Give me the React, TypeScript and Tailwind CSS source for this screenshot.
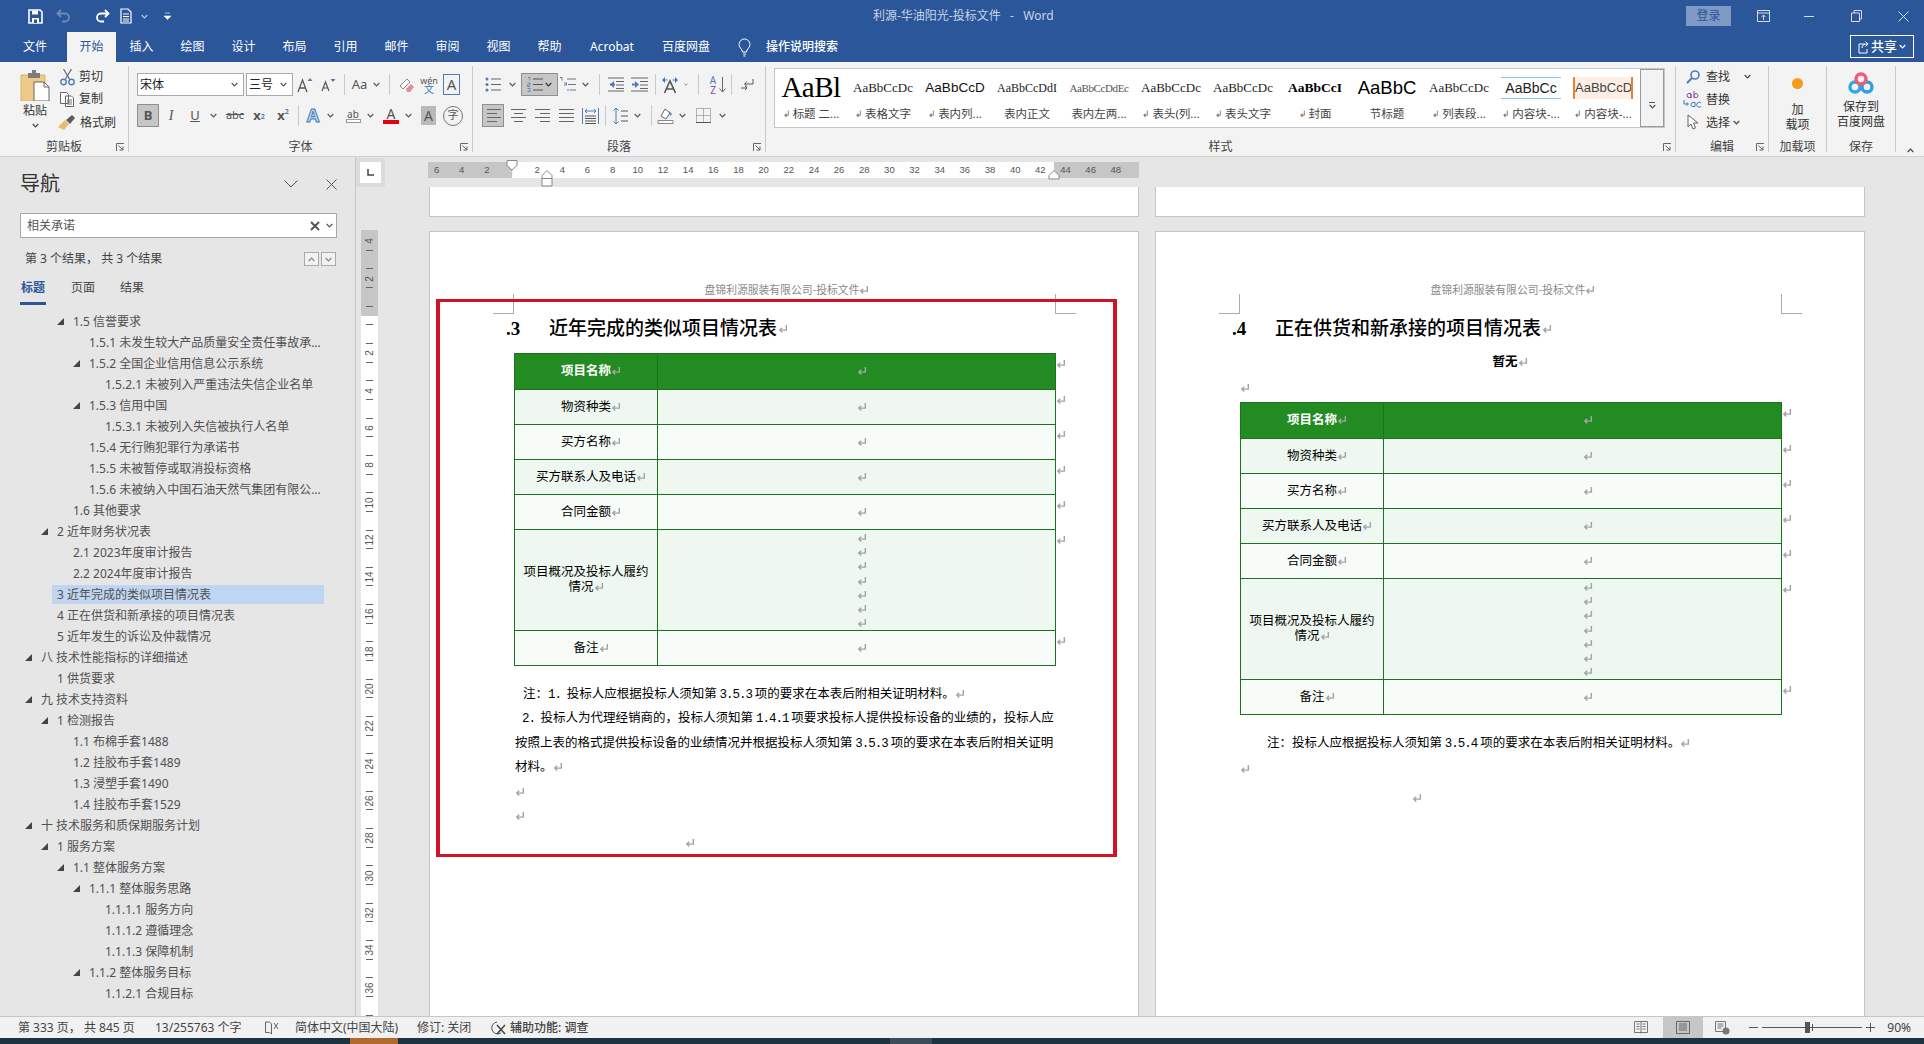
import React from "react";

const UI = "font-['Noto_Sans','Noto_Sans_CJK_SC',sans-serif]";
const DOC = "font-['Liberation_Serif','Noto_Sans_CJK_SC',serif]";

function Chev({ className = "" }: { className?: string }) {
  return (
    <svg width="7" height="5" viewBox="0 0 7 5" className={className}>
      <path d="M.7 1 3.5 3.8 6.3 1" fill="none" stroke="currentColor" strokeWidth="1.2" />
    </svg>
  );
}

function Launcher() {
  return (
    <svg width="9" height="9" viewBox="0 0 9 9" className="absolute right-[3px] top-[6px]">
      <path d="M.5 8V.5H8M2.5 2.5 7 7M7 3.5V7H3.5" fill="none" stroke="#666" strokeWidth="1" />
    </svg>
  );
}

function Ret({ className = "" }: { className?: string }) {
  return (
    <svg width="10" height="10" viewBox="0 0 9 9" className={"inline-block align-[-1px] " + className}>
      <path d="M7.5 1v4.5H2M3.8 3.3 1.6 5.5l2.2 2.2" fill="none" stroke="#a4a4a4" strokeWidth="1.3" />
    </svg>
  );
}

function Sep({ className = "" }: { className?: string }) {
  return <div className={"w-px bg-[#c9c9c9] " + className} />;
}

function Box({ className = "", children }: { className?: string; children?: React.ReactNode }) {
  return <div className={"flex shrink-0 items-center justify-center text-[#555] " + className}>{children}</div>;
}

function Lines({ rows, color = "#666" }: { rows: [number, number][]; color?: string }) {
  return (
    <svg width="17" height="15" viewBox="0 0 17 15">
      {rows.map(([a, b], i) => (
        <path key={i} d={`M${a} ${1.5 + i * (12 / (rows.length - 1))}H${b}`} stroke={color} strokeWidth="1" />
      ))}
    </svg>
  );
}

function GroupLabel({ text, launcher = false }: { text: string; launcher?: boolean }) {
  return (
    <div className="relative flex h-[19px] items-center justify-center text-[12px] leading-[19px] text-[#444]">
      {text}
      {launcher && <Launcher />}
    </div>
  );
}

const styles = [
  { p: "AaBl", l: "标题 二...", r: true, c: "font-['Liberation_Serif',serif] text-[29px] text-black tracking-[-0.5px]" },
  { p: "AaBbCcDc", l: "表格文字", r: true, c: "font-['Liberation_Serif',serif] text-[13px] text-[#222]" },
  { p: "AaBbCcD", l: "表内列...", r: true, c: "font-['Liberation_Sans',sans-serif] text-[13.5px] text-[#111]" },
  { p: "AaBbCcDdI", l: "表内正文", r: false, c: "font-['Liberation_Serif',serif] text-[12px] text-[#222]" },
  { p: "AaBbCcDdEc", l: "表内左两...", r: false, c: "font-['Liberation_Serif',serif] text-[11px] text-[#555] tracking-[-0.4px]" },
  { p: "AaBbCcDc", l: "表头(列...", r: true, c: "font-['Liberation_Serif',serif] text-[13px] text-[#222]" },
  { p: "AaBbCcDc", l: "表头文字", r: true, c: "font-['Liberation_Serif',serif] text-[13px] text-[#222]" },
  { p: "AaBbCcI", l: "封面", r: true, c: "font-['Liberation_Serif',serif] font-bold text-[13.5px] text-black" },
  { p: "AaBbC", l: "节标题", r: false, c: "font-['Liberation_Sans',sans-serif] text-[18.5px] text-black" },
  { p: "AaBbCcDc", l: "列表段...", r: true, c: "font-['Liberation_Serif',serif] text-[13px] text-[#222]" },
  { p: "AaBbCc", l: "内容块-...", r: true, c: "font-['Liberation_Sans',sans-serif] text-[14px] text-[#222] border-y border-[#7bd0f3] leading-[20px]" },
  { p: "AaBbCcDt", l: "内容块-...", r: true, c: "font-['Liberation_Sans',sans-serif] text-[13px] text-[#444] bg-[#fdeee6] border-x-2 border-[#e9803a] leading-[22px]" },
];

const tree: [number, boolean, string, boolean?][] = [
  [2, true, "1.5 信誉要求"],
  [3, false, "1.5.1 未发生较大产品质量安全责任事故承..."],
  [3, true, "1.5.2 全国企业信用信息公示系统"],
  [4, false, "1.5.2.1 未被列入严重违法失信企业名单"],
  [3, true, "1.5.3 信用中国"],
  [4, false, "1.5.3.1 未被列入失信被执行人名单"],
  [3, false, "1.5.4 无行贿犯罪行为承诺书"],
  [3, false, "1.5.5 未被暂停或取消投标资格"],
  [3, false, "1.5.6 未被纳入中国石油天然气集团有限公..."],
  [2, false, "1.6 其他要求"],
  [1, true, "2 近年财务状况表"],
  [2, false, "2.1 2023年度审计报告"],
  [2, false, "2.2 2024年度审计报告"],
  [1, false, "3 近年完成的类似项目情况表", true],
  [1, false, "4 正在供货和新承接的项目情况表"],
  [1, false, "5 近年发生的诉讼及仲裁情况"],
  [0, true, "八 技术性能指标的详细描述"],
  [1, false, "1 供货要求"],
  [0, true, "九 技术支持资料"],
  [1, true, "1 检测报告"],
  [2, false, "1.1 布棉手套1488"],
  [2, false, "1.2 挂胶布手套1489"],
  [2, false, "1.3 浸塑手套1490"],
  [2, false, "1.4 挂胶布手套1529"],
  [0, true, "十 技术服务和质保期服务计划"],
  [1, true, "1 服务方案"],
  [2, true, "1.1 整体服务方案"],
  [3, true, "1.1.1 整体服务思路"],
  [4, false, "1.1.1.1 服务方向"],
  [4, false, "1.1.1.2 遵循理念"],
  [4, false, "1.1.1.3 保障机制"],
  [3, true, "1.1.2 整体服务目标"],
  [4, false, "1.1.2.1 合规目标"],
];
const levelPad = ["pl-[25px]", "pl-[41px]", "pl-[57px]", "pl-[73px]", "pl-[89px]"];

function TitleBar() {
  return (
    <div className="flex h-[32px] shrink-0 items-center bg-[#2b579a] text-white">
      <div className="flex w-[180px] shrink-0 items-center">
        <Box className="ml-[25px] w-[20px] text-white">
          <svg width="15" height="15" viewBox="0 0 15 15">
            <path d="M1 1h11l2 2v11H1z" fill="none" stroke="#fff" strokeWidth="1.6" />
            <path d="M4 1.5h6v4H4zM4 9h7v5H4z" fill="#fff" />
            <path d="M6 10.5h3v3.5H6z" fill="#2b579a" />
          </svg>
        </Box>
        <Box className="ml-[10px] w-[16px]">
          <svg width="15" height="14" viewBox="0 0 15 14">
            <path d="M5 1 1.5 4.500 5 8M2 4.500h7a4 4 0 0 1 0 8H6" fill="none" stroke="#6d8ab8" strokeWidth="1.800" />
          </svg>
        </Box>
        <Box className="ml-[1px] w-[14px] text-[#6d8ab8]"><Chev /></Box>
        <Box className="ml-[8px] w-[16px]">
          <svg width="15" height="14" viewBox="0 0 15 14">
            <path d="M10 1l3.500 3.500L10 8M13 4.500H6a4 4 0 0 0 0 8h3" fill="none" stroke="#fff" strokeWidth="1.800" />
          </svg>
        </Box>
        <Box className="ml-[8px] w-[16px]">
          <svg width="12" height="16" viewBox="0 0 12 16">
            <path d="M1 1h7l3 3v11H1z" fill="none" stroke="#fff" strokeWidth="1.200" />
            <path d="M3 6h6M3 8.500h6M3 11h6M3 13h6" stroke="#fff" />
          </svg>
        </Box>
        <Box className="ml-[3px] w-[14px] text-[#b6c6de]"><Chev /></Box>
        <Box className="ml-[11px] w-[10px]">
          <svg width="7" height="8" viewBox="0 0 7 8"><path d="M1 1h5M0 4h7L3.500 7.500z" fill="#fff" stroke="#fff" strokeWidth=".6" /></svg>
        </Box>
      </div>
      <div className="ml-[693px] w-[186px] shrink-0 whitespace-pre text-[12px] text-[#c9d4e6]">利源-华油阳光-投标文件   -   Word</div>
      <div className="ml-[627px] flex h-[20px] w-[45px] shrink-0 items-center justify-center bg-[#7e9ac4] text-[12px] text-[#2b579a]">登录</div>
      <Box className="ml-[21px] w-[22px]">
        <svg width="13" height="12" viewBox="0 0 13 12">
          <path d="M.5.500h12v11H.5zM.5 3h12M6.500 10V5M4.500 7l2-2 2 2" fill="none" stroke="#d6deeb" />
        </svg>
      </Box>
      <Box className="ml-[25px] w-[20px]"><div className="h-px w-[10px] bg-[#d6deeb]" /></Box>
      <Box className="ml-[27px] w-[20px]">
        <svg width="11" height="12" viewBox="0 0 11 12"><path d="M.5 3h8v8.500H.5zM3 3V.5h7.500V9H8.500" fill="none" stroke="#d6deeb" /></svg>
      </Box>
      <Box className="ml-[27px] w-[20px]">
        <svg width="11" height="11" viewBox="0 0 11 11"><path d="M.5.500l10 10M10.500.500l-10 10" stroke="#d6deeb" /></svg>
      </Box>
    </div>
  );
}

function TabBar() {
  const two = ["插入", "绘图", "设计", "布局", "引用", "邮件", "审阅", "视图", "帮助"];
  return (
    <div className="flex h-[30px] shrink-0 items-stretch bg-[#2b579a] pl-[6px] text-[12px] text-white">
      <div className="flex w-[58px] items-center justify-center">文件</div>
      <div className="ml-[3px] flex w-[49px] items-center justify-center bg-[#f3f3f3] text-[#2b579a]">开始</div>
      {two.map((t) => (
        <div key={t} className="flex w-[51px] items-center justify-center">{t}</div>
      ))}
      <div className="flex w-[74px] items-center justify-center">Acrobat</div>
      <div className="flex w-[74px] items-center justify-center">百度网盘</div>
      <div className="flex w-[43px] items-center justify-center">
        <svg width="13" height="19" viewBox="0 0 13 19">
          <path d="M4.500 14c0-3-3.500-4-3.500-7.500a5.500 5.500 0 0 1 11 0C12 10 8.500 11 8.500 14zM5 16h3M5.500 18h2" fill="none" stroke="#fff" />
        </svg>
      </div>
      <div className="flex items-center font-medium">操作说明搜索</div>
      <div className="ml-[1012px] mt-[3px] flex h-[23px] w-[64px] items-center justify-center gap-[2px] border border-white font-medium text-[13px]">
        <svg width="11" height="14" viewBox="0 0 11 14">
          <path d="M7 4H1v9h8V9M4 8c0-3 2-4 5-4M7.500 1.500 10 4 7.500 6.500" fill="none" stroke="#fff" />
        </svg>
        共享
        <Chev />
      </div>
    </div>
  );
}

function Ribbon() {
  return (
    <div className={"flex h-[95px] shrink-0 border-b border-[#d0d0d0] bg-[#f3f3f3] text-[#333]"}>
      {/* 剪贴板 */}
      <div className="flex w-[128px] shrink-0 flex-col">
        <div className="flex h-[75px]">
          <div className="flex w-[70px] flex-col items-center pt-[8px]">
            <svg width="30" height="31" viewBox="0 0 30 31">
              <path d="M1 5h24v26H1z" fill="#edca85" stroke="#d9b56e" />
              <path d="M8 3h4V0h4v3h4v5H8z" fill="#7d7d7d" />
              <path d="M14 12h10l5 5v14H14z" fill="#fff" stroke="#666" />
              <path d="M24 12v5h5" fill="none" stroke="#666" />
            </svg>
            <div className="mt-[1px] text-[12px] leading-[18px] text-[#333]">粘贴</div>
            <Chev className="mt-[3px] text-[#444]" />
          </div>
          <div className="flex flex-col pt-[4px] text-[12px] leading-[22px] text-[#333]">
            <div className="flex h-[22px] items-center">
              <svg width="15" height="17" viewBox="0 0 15 17" className="ml-[-10px] mr-[4px]">
                <path d="M3.500 0l6 10M11.500 0l-6 10" stroke="#666" strokeWidth="1.200" />
                <circle cx="3.500" cy="13" r="2.700" fill="none" stroke="#4a7ebb" strokeWidth="1.400" />
                <circle cx="11.500" cy="13" r="2.700" fill="none" stroke="#4a7ebb" strokeWidth="1.400" />
              </svg>
              剪切
            </div>
            <div className="flex h-[22px] items-center">
              <svg width="14" height="15" viewBox="0 0 14 15" className="ml-[-10px] mr-[5px]">
                <path d="M.5.500h6l2 2v9h-8zM5.500 4h6l2 2v8.500h-8z" fill="#fff" stroke="#666" />
                <path d="M7 8h5M7 10h5M7 12h5" stroke="#777" />
              </svg>
              复制
            </div>
            <div className="flex h-[25px] items-center">
              <svg width="17" height="16" viewBox="0 0 17 16" className="ml-[-12px] mr-[5px]">
                <path d="M0 12 7 5l4 4-5 6z" fill="#e5bd72" />
                <path d="M8 5l6-5 3 3-5 6z" fill="#5c5c5c" />
              </svg>
              格式刷
            </div>
          </div>
        </div>
        <GroupLabel text="剪贴板" launcher />
      </div>
      <Sep className="my-[4px]" />
      {/* 字体 */}
      <div className="flex w-[343px] shrink-0 flex-col">
        <div className="flex h-[75px] flex-col gap-[8px] pt-[11px] pl-[8px]">
          <div className="flex h-[23px] items-center">
            <div className="flex h-[23px] w-[107px] items-center justify-between border border-[#aaa] bg-white pl-[2px] pr-[5px] text-[12px] text-[#222]">宋体<Chev className="text-[#555]" /></div>
            <div className="ml-[2px] flex h-[23px] w-[47px] items-center justify-between border border-[#aaa] bg-white pl-[2px] pr-[5px] text-[12px] text-[#222]">三号<Chev className="text-[#555]" /></div>
            <Box className="w-[24px]">
              <svg width="16" height="16" viewBox="0 0 16 16"><path d="M1 15 5.500 3 10 15M2.700 11h5.600" fill="none" stroke="#555" strokeWidth="1.300" /><path d="M10.500 4 13 1l2.500 3z" fill="#4a7ebb" /></svg>
            </Box>
            <Box className="w-[22px]">
              <svg width="15" height="14" viewBox="0 0 15 14"><path d="M1 13 4.500 4 8 13M2.300 10h4.400" fill="none" stroke="#555" strokeWidth="1.200" /><path d="M9.500 1h5L12 4z" fill="#4a7ebb" /></svg>
            </Box>
            <Box className="w-[10px]"><Sep className="h-[21px]" /></Box>
            <Box className="w-[21px] text-[13px]">Aa</Box>
            <Box className="w-[12px]"><Chev /></Box>
            <Box className="w-[14px]"><Sep className="h-[21px]" /></Box>
            <Box className="w-[21px]">
              <svg width="16" height="16" viewBox="0 0 16 16">
                <path d="M1 9 8 2l3 3-7 7z" fill="#fff" stroke="#888" />
                <path d="M7 12l5-5 3 3-4 5H8z" fill="#e98a9b" />
              </svg>
            </Box>
            <Box className="w-[24px] flex-col leading-[9px] text-[#444]">
              <span className="text-[9px]">wén</span>
              <span className="text-[10px] text-[#3d78b8]">文</span>
            </Box>
            <Box className="ml-[2px] h-[21px] w-[17px] border border-[#4a7ebb] text-[15px] text-[#333]">A</Box>
          </div>
          <div className="flex h-[23px] items-center text-[12px]">
            <Box className="h-[23px] w-[22px] border border-[#8f8f8f] bg-[#c6c6c6] font-bold text-[13px] text-[#333]">B</Box>
            <Box className="ml-[1px] w-[22px] font-['Liberation_Serif',serif] italic text-[14px]">I</Box>
            <Box className="ml-[2px] w-[22px] text-[13px] underline">U</Box>
            <Box className="w-[14px]"><Chev /></Box>
            <Box className="ml-[2px] w-[26px] text-[11px] line-through">abc</Box>
            <Box className="w-[22px] font-bold text-[13px]">x<sub className="text-[7px] text-[#4a7ebb]">2</sub></Box>
            <Box className="ml-[1px] w-[24px] font-bold text-[13px]">x<sup className="text-[7px] text-[#4a7ebb]">2</sup></Box>
            <Box className="w-[6px]"><Sep className="h-[21px]" /></Box>
            <Box className="ml-[1px] w-[22px] text-[18px] font-bold text-[#bcd6f0] [-webkit-text-stroke:1px_#4a7ebb]">A</Box>
            <Box className="w-[12px]"><Chev /></Box>
            <Box className="ml-[6px] w-[22px] flex-col leading-[10px]">
              <span className="text-[10px]">ab</span>
              <span className="h-[4px] w-[15px] border border-[#999] bg-white" />
            </Box>
            <Box className="w-[13px]"><Chev /></Box>
            <Box className="ml-[3px] w-[22px] flex-col leading-[12px]">
              <span className="text-[14px]">A</span>
              <span className="h-[4px] w-[16px] bg-[#e3000f]" />
            </Box>
            <Box className="w-[12px]"><Chev /></Box>
            <Box className="ml-[7px] h-[19px] w-[15px] bg-[#b9b9b9] text-[14px]">A</Box>
            <Box className="ml-[7px] h-[20px] w-[20px] rounded-full border border-[#777] text-[11px]">字</Box>
          </div>
        </div>
        <GroupLabel text="字体" launcher />
      </div>
      <Sep className="my-[4px]" />
      {/* 段落 */}
      <div className="flex w-[292px] shrink-0 flex-col">
        <div className="flex h-[75px] flex-col gap-[8px] pt-[11px]">
          <div className="flex h-[23px] items-center pl-[8px]">
            <Box className="w-[24px]">
              <svg width="17" height="15" viewBox="0 0 17 15"><circle cx="2" cy="2" r="1.500" fill="#4a7ebb" /><circle cx="2" cy="7.500" r="1.500" fill="#4a7ebb" /><circle cx="2" cy="13" r="1.500" fill="#4a7ebb" /><path d="M6 2h10M6 7.500h10M6 13h10" stroke="#666" /></svg>
            </Box>
            <Box className="w-[14px]"><Chev /></Box>
            <div className="ml-[2px] flex h-[23px] w-[37px] items-center justify-around border border-[#8f8f8f] bg-[#c6c6c6] px-[4px]">
              <svg width="17" height="15" viewBox="0 0 17 15"><path d="M6 2h10M6 7.500h10M6 13h10" stroke="#555" /><path d="M1 .5h2v3M.5 6h2.500v2h-2.500v1.500H3M.5 11.500h2.500v3H.5" fill="none" stroke="#4a7ebb" strokeWidth=".8" /></svg>
              <Chev />
            </div>
            <Box className="w-[20px]">
              <svg width="18" height="15" viewBox="0 0 18 15"><path d="M1 .5h2v3M8 2h9M9 7.500h8M11 13h6" stroke="#666" strokeWidth=".9" fill="none" /><path d="M5 6h2.500v2H5M9 12v2" stroke="#4a7ebb" fill="none" /></svg>
            </Box>
            <Box className="w-[14px]"><Chev /></Box>
            <Box className="w-[14px]"><Sep className="h-[21px]" /></Box>
            <Box className="w-[18px]">
              <svg width="17" height="15" viewBox="0 0 17 15"><path d="M1 1h16M9 4.500h8M9 8h8M9 11.500h8M1 14h16" stroke="#666" /><path d="M7 4 3 7.500 7 11z" fill="#4a7ebb" /><path d="M3 7.500h5" stroke="#4a7ebb" strokeWidth="2" /></svg>
            </Box>
            <Box className="w-[30px]">
              <svg width="17" height="15" viewBox="0 0 17 15"><path d="M0 1h17M9 4.500h8M9 8h8M9 11.500h8M0 14h17" stroke="#666" /><path d="M4 4l4 3.500L4 11z" fill="#4a7ebb" /><path d="M1 7.500h4" stroke="#4a7ebb" strokeWidth="2" /></svg>
            </Box>
            <Box className="w-[2px]"><Sep className="h-[21px]" /></Box>
            <Box className="w-[28px]">
              <svg width="18" height="18" viewBox="0 0 18 18">
                <path d="M3.500 17 9 5l5.500 12M5.500 13h7" fill="none" stroke="#555" strokeWidth="1.600" />
                <path d="M1 4l3-3v6zM17 4l-3-3v6z" fill="#3d78b8" />
                <path d="M4 4h2.500M11.500 4H14" stroke="#3d78b8" />
              </svg>
            </Box>
            <Box className="w-[4px]"><Chev /></Box>
            <Box className="w-[20px]"><Sep className="h-[21px]" /></Box>
            <Box className="w-[10px] flex-col text-[10px] leading-[10px]"><span className="text-[#4a7ebb]">A</span><span className="text-[#8a4bb0]">Z</span></Box>
            <Box className="w-[8px]">
              <svg width="7" height="16" viewBox="0 0 7 16"><path d="M3.500 0v15M.5 11.500l3 3.500 3-3.500" fill="none" stroke="#666" /></svg>
            </Box>
            <Box className="w-[10px]"><Sep className="h-[21px]" /></Box>
            <Box className="w-[22px]">
              <svg width="14" height="13" viewBox="0 0 14 13"><path d="M13 1v5H5M7 3.500 4.500 6 7 8.500" fill="none" stroke="#555" /><path d="M1 10h6M5 8l2 2-2 2" fill="none" stroke="#555" /></svg>
            </Box>
          </div>
          <div className="flex h-[23px] items-center pl-[9px]">
            <Box className="h-[23px] w-[22px] border border-[#8f8f8f] bg-[#c6c6c6]"><Lines rows={[[2, 16], [2, 12], [2, 16], [2, 12]]} /></Box>
            <Box className="ml-[2px] w-[24px]"><Lines rows={[[1, 16], [4, 13], [1, 16], [4, 13]]} /></Box>
            <Box className="w-[24px]"><Lines rows={[[1, 16], [6, 16], [1, 16], [6, 16]]} /></Box>
            <Box className="w-[24px]"><Lines rows={[[1, 16], [1, 16], [1, 16], [1, 16]]} /></Box>
            <Box className="w-[24px]">
              <svg width="17" height="16" viewBox="0 0 17 16"><path d="M.5 0v16M16.500 0v16" stroke="#4a7ebb" /><path d="M3 3h11M5 1 3 3l2 2M12 1l2 2-2 2" fill="none" stroke="#4a7ebb" /><path d="M3 8h11M3 10.500h11M3 13h11M3 15.500h11" stroke="#555" /></svg>
            </Box>
            <Box className="w-[6px]"><Sep className="h-[21px]" /></Box>
            <Box className="ml-[1px] w-[23px]">
              <svg width="15" height="16" viewBox="0 0 15 16"><path d="M3 0v16M.5 2.500 3 0l2.500 2.500M.5 13.500 3 16l2.500-2.500" fill="none" stroke="#4a7ebb" /><path d="M8 3h7M8 8h7M8 13h7" stroke="#555" /></svg>
            </Box>
            <Box className="w-[10px]"><Chev /></Box>
            <Box className="ml-[4px] w-[10px]"><Sep className="h-[21px]" /></Box>
            <Box className="-ml-[3px] w-[24px]">
              <svg width="17" height="17" viewBox="0 0 17 17"><path d="M4 9 8 2l5 4-4 6z" fill="#fff" stroke="#666" /><path d="M12 4l3 3-2 2z" fill="#4a7ebb" /><path d="M1 13.500h15V16.500H1z" fill="#fff" stroke="#888" /></svg>
            </Box>
            <Box className="w-[10px]"><Chev /></Box>
            <Box className="ml-[4px] w-[24px]">
              <svg width="15" height="15" viewBox="0 0 15 15"><path d="M.5.500h14v14H.5zM7.500.5v14M.5 7.500h14" fill="none" stroke="#777" strokeDasharray="1 1" /><path d="M0 14.500h15" stroke="#555" /></svg>
            </Box>
            <Box className="ml-[2px] w-[10px]"><Chev /></Box>
          </div>
        </div>
        <GroupLabel text="段落" launcher />
      </div>
      <Sep className="my-[4px]" />
      {/* 样式 */}
      <div className="flex w-[909px] shrink-0 flex-col">
        <div className="flex h-[75px] pl-[8px] pt-[6px]">
          <div className="flex h-[60px] w-[891px] border border-[#c6c6c6] bg-white">
            <div className="flex flex-1 overflow-hidden">
              {styles.map((s, i) => (
                <div key={i} className="flex w-[72px] shrink-0 flex-col items-center pt-[4px]">
                  <div className="flex h-[30px] w-[60px] items-center justify-center">
                    <div className={"w-full overflow-hidden whitespace-nowrap text-center " + s.c}>{s.p}</div>
                  </div>
                  <div className="mt-[2px] flex h-[18px] items-center text-[11.5px] leading-[16px] text-[#444]">
                    {s.r && <span className="mr-[2px] text-[9px] text-[#666]">↲</span>}
                    {s.l}
                  </div>
                </div>
              ))}
            </div>
            <div className="flex w-[24px] shrink-0 flex-col items-center justify-center gap-[1px] border border-[#9a9a9a] bg-[#f3f3f3] pt-[14px]">
              <div className="h-px w-[6px] bg-[#555]" />
              <Chev className="text-[#555]" />
            </div>
          </div>
        </div>
        <GroupLabel text="样式" launcher />
      </div>
      <Sep className="my-[4px]" />
      {/* 编辑 */}
      <div className="flex w-[92px] shrink-0 flex-col">
        <div className="flex h-[75px] flex-col pt-[3px] text-[12px] leading-[23px] text-[#333]">
          <div className="flex h-[23px] items-center pl-[10px]">
            <svg width="14" height="14" viewBox="0 0 14 14" className="mr-[6px]"><circle cx="9" cy="5" r="4" fill="none" stroke="#4a7ebb" strokeWidth="1.600" /><path d="M6 8 1 13" stroke="#4a7ebb" strokeWidth="2" /></svg>
            查找
            <Chev className="ml-[14px] text-[#444]" />
          </div>
          <div className="flex h-[23px] items-center pl-[7px]">
            <svg width="19" height="18" viewBox="0 0 19 18" className="mr-[4px]">
              <path d="M6 2.500a2 2 0 1 0 0 4h2v-4zM8 3v4M11 0v7M11 4.500a2 2 0 1 1 0 .1" fill="none" stroke="#7a4bb0" />
              <path d="M10 11.500a2 2 0 1 0 0 4h2v-4zM18 12a2.500 2.500 0 1 0 0 3.500" fill="none" stroke="#3d78b8" />
              <path d="M1 9v4h4M3.500 11.500 5.500 13l-2 1.500" fill="none" stroke="#3d78b8" />
            </svg>
            替换
          </div>
          <div className="flex h-[23px] items-center pl-[11px]">
            <svg width="12" height="17" viewBox="0 0 12 17" className="mr-[7px]"><path d="M1 1v12l3-3 2 5 2.500-1-2-5H11z" fill="#fff" stroke="#666" /></svg>
            选择
            <Chev className="ml-[3px] text-[#444]" />
          </div>
        </div>
        <GroupLabel text="编辑" launcher />
      </div>
      <Sep className="my-[4px]" />
      {/* 加载项 */}
      <div className="flex w-[57px] shrink-0 flex-col">
        <div className="flex h-[75px] flex-col items-center pt-[16px] text-[12px] leading-[15px] text-[#333]">
          <div className="h-[11px] w-[11px] rounded-full bg-[#f79a1e]" />
          <div className="mt-[13px]">加</div>
          <div>载项</div>
        </div>
        <GroupLabel text="加载项" />
      </div>
      <Sep className="my-[4px]" />
      {/* 保存 */}
      <div className="flex w-[68px] shrink-0 flex-col">
        <div className="flex h-[75px] flex-col items-center pt-[10px] text-[12px] leading-[15px] text-[#333]">
          <svg width="26" height="23" viewBox="0 0 26 23">
            <circle cx="7" cy="15" r="5" fill="none" stroke="#2fa8e6" strokeWidth="3.400" />
            <circle cx="19" cy="15" r="5" fill="none" stroke="#2f9fe0" strokeWidth="3.400" />
            <circle cx="13" cy="7" r="5" fill="none" stroke="#ef5a77" strokeWidth="3.400" />
          </svg>
          <div className="mt-[4px]">保存到</div>
          <div>百度网盘</div>
        </div>
        <GroupLabel text="保存" />
      </div>
      <Sep className="my-[4px]" />
      <div className="flex flex-1 items-end justify-center pb-[3px] text-[#444]">
        <Chev className="rotate-180" />
      </div>
    </div>
  );
}

function NavPane() {
  return (
    <div className={"flex w-[356px] shrink-0 flex-col overflow-hidden border-r border-[#c6c6c6] bg-[#e6e6e6] " + UI}>
      <div className="mt-[13px] flex h-[28px] items-center pl-[20px]">
        <div className="w-[250px] text-[20px] leading-[28px] text-[#333]">导航</div>
        <svg width="14" height="8" viewBox="0 0 14 8" className="ml-[14px]"><path d="M.5.500 7 7l6.500-6.500" fill="none" stroke="#555" /></svg>
        <svg width="11" height="11" viewBox="0 0 11 11" className="ml-[28px]"><path d="M.5.500l10 10M10.500.500l-10 10" stroke="#555" /></svg>
      </div>
      <div className="ml-[20px] mt-[15px] flex h-[25px] w-[317px] items-center border border-[#a9a9a9] bg-white pl-[6px] pr-[3px] text-[12px] text-[#555]">
        <span className="flex-1">相关承诺</span>
        <svg width="10" height="10" viewBox="0 0 10 10" className="mr-[6px]"><path d="M1 1l8 8M9 1 1 9" stroke="#555" strokeWidth="2" /></svg>
        <Chev className="text-[#555]" />
      </div>
      <div className="mt-[10px] flex h-[22px] items-center pl-[25px] pr-[19px] text-[12px] text-[#444]">
        <span className="flex-1 whitespace-pre">第 3 个结果， 共 3 个结果</span>
        <div className="flex h-[14px] w-[15px] items-center justify-center border border-[#aaa] bg-[#f2f2f2] text-[#888]"><Chev className="rotate-180" /></div>
        <div className="ml-[2px] flex h-[14px] w-[15px] items-center justify-center border border-[#aaa] bg-[#f2f2f2] text-[#888]"><Chev /></div>
      </div>
      <div className="mt-[7px] flex h-[28px] pl-[20px] text-[12px] text-[#444]">
        <div className="w-[26px] border-b-[3px] border-[#2b579a] text-center font-bold leading-[22px] text-[#2b579a]">标题</div>
        <div className="ml-[24px] w-[26px] text-center leading-[22px]">页面</div>
        <div className="ml-[23px] w-[26px] text-center leading-[22px]">结果</div>
      </div>
      <div className="mt-[6px] text-[12px] leading-[21px] text-[#505050]">
        {tree.map(([lvl, arrow, text, hi], i) =>
          hi ? (
            <div key={i} className="ml-[52px] h-[21px] w-[272px] border-y border-[#e6e6e6] bg-[#c0d5f2] pl-[5px] leading-[19px]">{text}</div>
          ) : (
            <div key={i} className={"flex h-[21px] items-center " + levelPad[lvl]}>
              <div className="w-[16px] shrink-0">
                {arrow && <svg width="7" height="7" viewBox="0 0 7 7" className="block"><path d="M7 0v7H0z" fill="#444" /></svg>}
              </div>
              <span className="whitespace-nowrap">{text}</span>
            </div>
          )
        )}
      </div>
    </div>
  );
}

function VRuler() {
  const labels: Record<number, string> = { 0: "4", 2: "2" };
  for (let i = 6; i <= 40; i += 2) labels[i] = String(i - 4);
  return (
    <div className="ml-[5px] flex w-[17px] flex-1 flex-col overflow-hidden bg-[linear-gradient(#c6c6c6_0,#c6c6c6_86px,#ffffff_86px)] pt-[2px] font-['Liberation_Sans',sans-serif] text-[10px] text-[#555]">
      {Array.from({ length: 43 }, (_, i) => (
        <div key={i} className="relative flex h-[18.67px] shrink-0 items-center justify-center">
          {labels[i] && <span className="-rotate-90 whitespace-nowrap leading-none">{labels[i]}</span>}
          <div className="absolute bottom-0 left-[5px] h-px w-[7px] bg-[#666]" />
        </div>
      ))}
    </div>
  );
}

function HRuler() {
  const cells = ["6", "4", "2", "", ...Array.from({ length: 24 }, (_, i) => String((i + 1) * 2))];
  return (
    <div className="relative mt-[5px] h-[16px] w-[711px] shrink-0 bg-[linear-gradient(90deg,#c6c6c6_0,#c6c6c6_84px,#ffffff_84px,#ffffff_626px,#c6c6c6_626px)]">
      <div className="-ml-[4px] flex h-full items-center font-['Liberation_Sans',sans-serif] text-[9.5px] text-[#555]">
        {cells.map((c, i) => (
          <div key={i} className="w-[25.17px] shrink-0 text-center leading-none">{c}</div>
        ))}
      </div>
      <svg width="12" height="11" viewBox="0 0 12 11" className="absolute left-[78px] top-[-2px]">
        <path d="M1 .5h10v5L6 10 1 5.500z" fill="#fff" stroke="#888" />
      </svg>
      <svg width="12" height="17" viewBox="0 0 12 17" className="absolute left-[113px] top-[8px]">
        <path d="M1 5.500 6 .5l5 5v3H1zM1 8.500h10v7.500H1z" fill="#fff" stroke="#888" />
      </svg>
      <svg width="12" height="10" viewBox="0 0 12 10" className="absolute left-[620px] top-[8px]">
        <path d="M1 5.500 6 .5l5 5v3.500H1z" fill="#fff" stroke="#888" />
      </svg>
    </div>
  );
}

function N({ children }: { children: React.ReactNode }) {
  return <span className="font-['Liberation_Mono',monospace] tracking-[-1px]">{children}</span>;
}

const rows = [
  { k: "物资种类", bg: "bg-[#eef8f0]", h: "h-[35px]" },
  { k: "买方名称", bg: "bg-[#f7fcf8]", h: "h-[35px]" },
  { k: "买方联系人及电话", bg: "bg-[#eef8f0]", h: "h-[35px]" },
  { k: "合同金额", bg: "bg-[#f7fcf8]", h: "h-[35px]" },
];

function EndMark() {
  return (
    <td className="w-[16px] pt-[3px] align-top leading-[12px]">
      <Ret />
    </td>
  );
}

function DocTable() {
  const cell = "border border-[#1b741b] text-center align-middle pt-0 pr-0 pb-[4px]";
  return (
    <table className="ml-[84px] w-[557px] table-fixed border-collapse text-[12.5px] leading-[15px] text-black">
      <colgroup>
        <col className="w-[143px]" />
        <col className="w-[398px]" />
        <col className="w-[16px]" />
      </colgroup>
      <tbody>
        <tr className="h-[36px]">
          <td className={cell + " bg-[#228b22] pl-[10px] font-bold text-white"}>项目名称<Ret /></td>
          <td className={cell + " bg-[#228b22] pl-[10px]"}><Ret /></td>
          <EndMark />
        </tr>
        {rows.map((r) => (
          <tr key={r.k} className={r.h}>
            <td className={cell + " pl-[10px] " + r.bg}>{r.k}<Ret /></td>
            <td className={cell + " pl-[10px] " + r.bg}><Ret /></td>
            <EndMark />
          </tr>
        ))}
        <tr className="h-[101px]">
          <td className="border border-[#1b741b] bg-[#eef8f0] px-[8px] pb-[4px] text-center align-middle">项目概况及投标人履约情况<Ret /></td>
          <td className="border border-[#1b741b] bg-[#eef8f0] pl-[10px] text-center align-top leading-[14.2px]">
            {Array.from({ length: 7 }, (_, i) => (
              <div key={i} className="h-[14.2px]"><Ret /></div>
            ))}
          </td>
          <EndMark />
        </tr>
        <tr className="h-[35px]">
          <td className={cell + " bg-[#f7fcf8] pl-[10px]"}>备注<Ret /></td>
          <td className={cell + " bg-[#f7fcf8] pl-[10px]"}><Ret /></td>
          <EndMark />
        </tr>
      </tbody>
    </table>
  );
}

function PageHead({ num, title }: { num: string; title: string }) {
  return (
    <>
      <div className="absolute left-[63px] top-[62px] h-[20px] w-[21px] border-b border-r border-[#aaa]" />
      <div className="absolute left-[625px] top-[62px] h-[20px] w-[21px] border-b border-l border-[#aaa]" />
      <div className="mt-[49px] h-[16px] pl-[6px] text-center text-[10.8px] leading-[16px] text-[#8a8a8a]">
        盘锦利源服装有限公司-投标文件<Ret />
      </div>
      <div className={"mt-[18px] flex h-[28px] items-center pl-[76px] text-[19px] font-medium leading-[28px] text-black " + DOC}>
        <span className="w-[43px] shrink-0 whitespace-pre font-bold">{num}</span>
        {title}
        <Ret className="ml-[1px]" />
      </div>
    </>
  );
}

function Page({ children }: { children: React.ReactNode }) {
  return (
    <div className="flex w-[710px] flex-col">
      <div className="h-[30px] shrink-0 border border-t-0 border-[#c6c6c6] bg-white" />
      <div className="relative mt-[14px] flex h-[785px] flex-col overflow-hidden border border-b-0 border-[#c6c6c6] bg-white">
        {children}
      </div>
    </div>
  );
}

function Line({ className = "", children }: { className?: string; children?: React.ReactNode }) {
  return <div className={"h-[24.4px] whitespace-pre leading-[24.4px] " + className}>{children}</div>;
}

function Document() {
  return (
    <div className="flex flex-1 flex-col overflow-hidden font-['Noto_Sans_CJK_SC',sans-serif]">
      <HRuler />
      <div className="mt-[9px] flex gap-[16px] pl-[1px]">
        <Page>
          <PageHead num=".3" title="近年完成的类似项目情况表" />
          <div className="mt-[10px]"><DocTable /></div>
          <div className="mt-[15px] text-[12.5px] text-black">
            <Line className="pl-[93px]">注：<N>1.</N>  投标人应根据投标人须知第 <N>3.5.3</N> 项的要求在本表后附相关证明材料。<Ret /></Line>
            <Line className="pl-[92px]"><N>2.</N>  投标人为代理经销商的，投标人须知第 <N>1.4.1</N> 项要求投标人提供投标设备的业绩的，投标人应</Line>
            <Line className="pl-[85px]">按照上表的格式提供投标设备的业绩情况并根据投标人须知第 <N>3.5.3</N> 项的要求在本表后附相关证明</Line>
            <Line className="pl-[85px]">材料。<Ret /></Line>
            <Line className="pl-[85px]"><Ret /></Line>
            <Line className="pl-[85px]"><Ret /></Line>
            <Line className="pl-[255px] pt-[3px]"><Ret /></Line>
          </div>
          <div className="absolute left-[6px] top-[67px] h-[558px] w-[681px] border-x-4 border-y-[3px] border-[#d01327]" />
        </Page>
        <Page>
          <PageHead num=".4" title="正在供货和新承接的项目情况表" />
          <div className="mt-[6px] h-[24px] text-center text-[12.5px] font-bold leading-[24px] text-black">暂无<Ret /></div>
          <div className="h-[24px] pl-[84px] leading-[24px]"><Ret /></div>
          <div className="mt-[5px]"><DocTable /></div>
          <Line className="mt-[15px] pl-[111px] text-[12.5px] text-black">注：投标人应根据投标人须知第 <N>3.5.4</N> 项的要求在本表后附相关证明材料。<Ret /></Line>
          <div className="h-[24px] pl-[84px] leading-[24px]"><Ret /></div>
          <div className="h-[24px] pl-[256px] pt-[5px] leading-[24px]"><Ret /></div>
        </Page>
      </div>
    </div>
  );
}

function StatusBar() {
  return (
    <div className={"flex h-[22px] shrink-0 items-stretch border-t border-[#c6c6c6] bg-[#f1f1f1] text-[12px] text-[#444] " + UI}>
      <div className="ml-[18px] flex w-[137px] items-center whitespace-pre">第 333 页， 共 845 页</div>
      <div className="flex w-[108px] items-center whitespace-pre">13/255763 个字</div>
      <div className="flex w-[32px] items-center pl-[2px]">
        <svg width="14" height="14" viewBox="0 0 14 14"><path d="M.5 1h4l2 2v10l-2-1.500h-4zM9 2l4 6M13 2 9 8" fill="none" stroke="#666" /></svg>
      </div>
      <div className="flex w-[122px] items-center whitespace-pre">简体中文(中国大陆)</div>
      <div className="flex w-[74px] items-center whitespace-pre">修订: 关闭</div>
      <div className="flex w-[19px] items-center">
        <svg width="17" height="15" viewBox="0 0 17 15"><path d="M6 2a6 6 0 1 0 4 11" fill="none" stroke="#555" /><path d="M6 5l8 9M14 5l-8 9" stroke="#444" strokeWidth="1.500" /></svg>
      </div>
      <div className="flex items-center whitespace-pre font-medium">辅助功能: 调查</div>
      <div className="ml-auto flex items-stretch">
        <div className="mr-[12px] flex w-[20px] items-center justify-center">
          <svg width="14" height="13" viewBox="0 0 14 13"><path d="M.5.500h13v11h-13zM7 .5v12M2.500 3h3M2.500 5.500h3M2.500 8h3M8.500 3h3M8.500 5.500h3M8.500 8h3" fill="none" stroke="#777" /></svg>
        </div>
        <div className="flex w-[40px] items-center justify-center bg-[#c6c6c6]">
          <svg width="14" height="13" viewBox="0 0 14 13"><path d="M.5.500h13v12h-13zM3 3h8M3 5h8M3 7h8M3 9h8" fill="none" stroke="#666" /></svg>
        </div>
        <div className="flex w-[39px] items-center justify-center">
          <svg width="15" height="14" viewBox="0 0 15 14"><path d="M.5.500h10v10h-10zM2.500 3h6M2.500 5h6M2.500 7h4" fill="none" stroke="#777" /><circle cx="11" cy="10" r="3.500" fill="#777" /></svg>
        </div>
        <div className="ml-[7px] flex items-center">
          <div className="h-px w-[9px] bg-[#555]" />
          <div className="relative ml-[4px] flex h-px w-[100px] bg-[#555]">
            <div className="absolute left-[43px] top-[-5px] h-[11px] w-[5px] bg-[#555]" />
            <div className="absolute left-[50px] top-[-3px] h-[7px] w-px bg-[#555]" />
          </div>
          <div className="relative ml-[4px] h-px w-[9px] bg-[#555]">
            <div className="absolute left-[4px] top-[-4px] h-[9px] w-px bg-[#555]" />
          </div>
        </div>
        <div className="ml-[12px] mr-[13px] flex items-center text-[12px]">90%</div>
      </div>
    </div>
  );
}

export default function App() {
  return (
    <div className={"flex h-[1044px] w-[1924px] flex-col overflow-hidden bg-[#e6e6e6] " + UI}>
      <TitleBar />
      <TabBar />
      <Ribbon />
      <div className="flex min-h-0 flex-1">
        <NavPane />
        <div className="flex w-[72px] shrink-0 flex-col">
          <div className="mt-px flex h-[29px] w-[29px] items-center justify-center bg-[#dcdcdc]">
            <div className="flex h-[21px] w-[21px] items-center justify-center bg-white">
              <svg width="7" height="7" viewBox="0 0 7 7"><path d="M1 0v6h6" fill="none" stroke="#444" strokeWidth="1.500" /></svg>
            </div>
          </div>
          <div className="h-[43px] shrink-0" />
          <VRuler />
        </div>
        <Document />
      </div>
      <StatusBar />
      <div className="flex h-[6px] shrink-0 bg-[#1e3340]">
        <div className="ml-[350px] w-[48px] bg-[#b06a2e]" />
        <div className="ml-[492px] w-[42px] bg-[#3c4c58]" />
      </div>
    </div>
  );
}
